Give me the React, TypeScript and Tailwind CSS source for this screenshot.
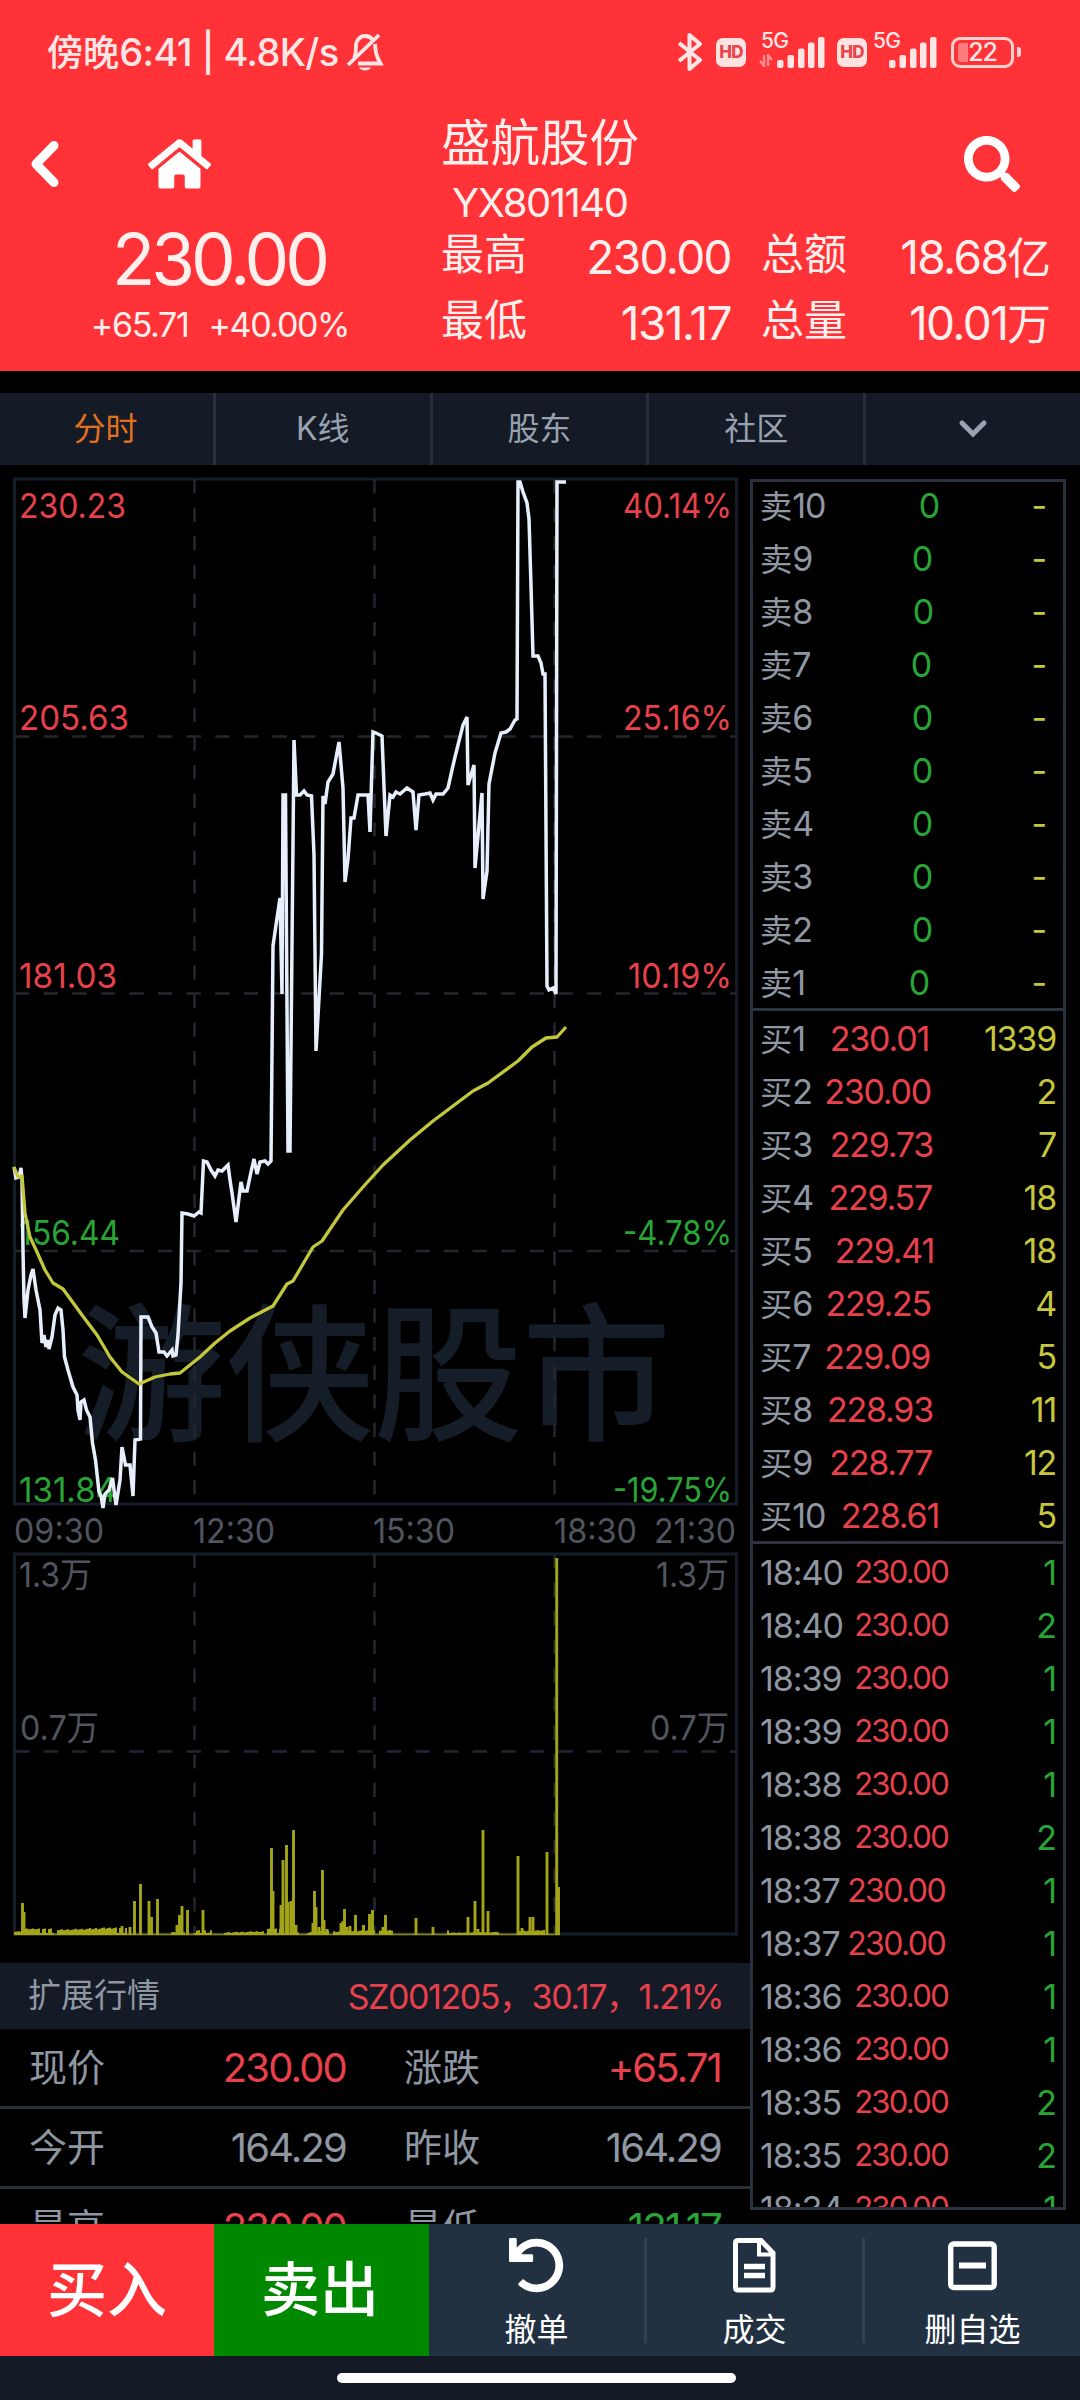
import { FaHome, FaSearch, FaUndo } from "react-icons/fa";

const RED = "#e8414b";
const GREEN = "#28a535";

/* Latin runs keep the surrounding size, Chinese runs are set slightly smaller. */
function Mix({ text }: { text: string }) {
  const parts = text.split(/([\u4e00-\u9fff]+)/).filter(Boolean);
  return (
    <>
      {parts.map((p, i) =>
        /[\u4e00-\u9fff]/.test(p) ? (
          <span key={i} className="text-[0.95em] tracking-normal">
            {p}
          </span>
        ) : (
          <span key={i}>{p}</span>
        )
      )}
    </>
  );
}

/* ---------- status bar ---------- */

function Signal() {
  return (
    <svg width="48" height="32" viewBox="0 0 48 32" fill="#ffe6e6">
      <rect x="0" y="23" width="6.5" height="8" rx="2" />
      <rect x="10.5" y="18" width="6.5" height="13" rx="2" />
      <rect x="21" y="11.5" width="6.5" height="19.5" rx="2" />
      <rect x="31" y="5.5" width="6.5" height="25.5" rx="2" />
      <rect x="41" y="0" width="6.5" height="31" rx="2" />
    </svg>
  );
}

function HD() {
  return (
    <div className="flex h-[29px] w-[30px] items-center justify-center rounded-[7px] bg-[#ffe3e3] text-[17px] leading-none font-extrabold tracking-[-0.05em] text-[#e8464b]">
      HD
    </div>
  );
}

function StatusBar() {
  return (
    <div className="flex h-[104px] items-center pl-[47px] text-[#ffe6e6]">
      <div className="flex w-[631px] items-center text-[38px] leading-[40px] font-medium tracking-[-0.016em] whitespace-pre">
        <span className="w-[294px]">
          <Mix text="傍晚6:41 | 4.8K/s" />
        </span>
        <svg width="40" height="40" viewBox="0 0 40 40" fill="none" stroke="#ffe6e6" strokeWidth="3.8" className="ml-[4px]">
          <path d="M9 26 C11 23 11 20 11 14 C11 8 15 4 20 4 C23 4 26 5.500 27.500 7.500" />
          <path d="M30 12 C30.500 19 31 24 35.500 31.500 L13 31.500" />
          <path d="M34 3 L3 33" />
          <path d="M14 35.500 H26 C24 39.500 16 39.500 14 35.500Z" fill="#ffe6e6" stroke="none" />
        </svg>
      </div>
      <svg width="25" height="40" viewBox="0 0 25 40" fill="none" stroke="#ffe6e6" strokeWidth="4" strokeLinejoin="round">
        <path d="M1 11 L22 28 L11.500 37 V3 L22 12 L1 29" />
      </svg>
      <div className="ml-[13px]">
        <HD />
      </div>
      <div className="relative ml-[31px] mt-[2px]">
        <Signal />
        <span className="absolute top-[-6px] left-[-16px] text-[21px] leading-[20px] font-medium tracking-[-0.04em]">5G</span>
        <svg className="absolute top-[17px] left-[-18px] opacity-50" width="14" height="13" viewBox="0 0 14 13" fill="none" stroke="#ffe6e6" strokeWidth="2.400">
          <path d="M5 1 V12 L1 7 M9 12 V1 L13 6" />
        </svg>
      </div>
      <div className="ml-[12px]">
        <HD />
      </div>
      <div className="relative ml-[22px] mt-[2px]">
        <Signal />
        <span className="absolute top-[-6px] left-[-16px] text-[21px] leading-[20px] font-medium tracking-[-0.04em]">5G</span>
      </div>
      <div className="relative ml-[14px] flex h-[31px] w-[63px] items-center justify-center rounded-[9px] border-[3px] border-[#ffd0d0] text-[25px] leading-none font-medium tracking-[-0.05em]">
        <span className="absolute top-[3px] left-[4px] h-[19px] w-[10px] rounded-l-[3px] bg-[#ff7c7e]" />
        <span className="relative">22</span>
      </div>
      <div className="ml-[3px] h-[10px] w-[4px] rounded-r-[3px] bg-[#ffd0d0]" />
    </div>
  );
}

/* ---------- header ---------- */

function Stat({ label, value }: { label: string; value: string }) {
  return (
    <div className="flex h-[66px] items-center justify-between">
      <span className="text-[43px] tracking-normal">{label}</span>
      <span className="mt-[6px] text-[46px] tracking-[-0.035em]">
        <Mix text={value} />
      </span>
    </div>
  );
}

function Header() {
  return (
    <header className="h-[371px] bg-[#ff3337] text-[#fff0ee]">
      <StatusBar />
      <div className="flex h-[128px]">
        <div className="flex h-[120px] w-[441px] items-center pl-[29px]">
          <svg width="32" height="50" viewBox="0 0 32 50" fill="none" stroke="#fff" strokeWidth="9" strokeLinejoin="round" strokeLinecap="round">
            <path d="M25 6.500 L7 25 L25 43.500" />
          </svg>
          <FaHome className="ml-[87px] h-[56px] w-[63px] text-white" />
        </div>
        <div className="flex-1 pt-[11px]">
          <h1 className="text-[49.5px] leading-[56px]">盛航股份</h1>
          <p className="pl-[11px] pt-[4px] text-[40px] leading-[56px] tracking-[-0.037em]">YX801140</p>
        </div>
        <div className="flex h-[120px] w-[116px] items-center">
          <FaSearch className="h-[56px] w-[56px] text-white" />
        </div>
      </div>
      <div className="flex">
        <div className="flex w-[438px] flex-col items-center">
          <div className="text-[71px] leading-[54px] tracking-[-0.057em]">230.00</div>
          <div className="flex gap-[20px] pt-[18px] pl-[2px] text-[34px] leading-[42px] tracking-[-0.04em] whitespace-nowrap">
            <span>+65.71</span>
            <span>+40.00%</span>
          </div>
        </div>
        <div className="ml-[3px] w-[290px] -mt-[11px]">
          <Stat label="最高" value="230.00" />
          <Stat label="最低" value="131.17" />
        </div>
        <div className="ml-[30px] w-[290px] -mt-[11px]">
          <Stat label="总额" value="18.68亿" />
          <Stat label="总量" value="10.01万" />
        </div>
      </div>
    </header>
  );
}

function Tabs() {
  return (
    <nav className="mt-[22px] flex h-[72px] bg-[#141b26] text-[32px] text-[#98a2b0]">
      {["分时", "K线", "股东", "社区"].map((t, i) => (
        <div
          key={t}
          className={
            "flex items-center justify-center border-r-[3px] border-[#25303c] pb-[1px] " +
            (i === 0 ? "w-[216px] pr-[2px] text-[#e2711f]" : "w-[216.7px]")
          }
        >
          {t}
        </div>
      ))}
      <div className="flex flex-1 items-center justify-center">
        <svg width="30" height="20" viewBox="0 0 30 20" fill="none" stroke="#98a2b0" strokeWidth="5" strokeLinecap="round">
          <path d="M4 4 L15 15 L26 4" />
        </svg>
      </div>
    </nav>
  );
}

/* ---------- charts ---------- */

const PRICE_LINE =
  "14,1167 16,1178 19,1177 21,1168 22,1180 23,1250 24,1300 25,1318 28,1290 31,1275 33,1269 36,1290 40,1310 42,1343 44,1335 46,1347 48,1340 49,1349 52,1337 55,1315 58,1308 61,1310 63,1330 64.5,1357 68,1370 73,1387 77,1395 78,1410 80,1420 81,1402 84,1400 86.5,1410 90,1417 92.5,1443 95.5,1460 99,1492 101,1496 103,1508 105,1494 109,1490 112.5,1478 114,1490 116,1505 120,1480 122,1447 125.5,1465 130,1465 133,1496 135,1440 140.5,1439 141,1317 148,1317 152,1327 156,1333 159,1352 164,1352 167,1356 172,1350 173,1356 176,1355 178,1335 181,1283 182,1213 188,1214 194,1216 199,1212 201,1213 203.5,1161 207,1162 211,1170 215,1176 218,1170 222,1171 228,1165 230,1180 232,1193 236,1222 241,1182 243,1191 247,1191 251,1172 254,1159 257,1174 260,1162 265,1161 268,1164 271,1161 273,946 276,925 280,898 282,994 283,795 285.5,795 288,1151 290,1151 294,740 296.5,795 300,795 304,791 307,795 311.5,796 314,855 316,1051 321.5,954 323,796 325,804 328,782 333,774 339,742 343,788 345,882 348,859 351,818 354,818 358,795 368,795 370,832 373,732 376,733 382,736 386,836 390,795 393,797 396,792 400,794 407,788 413,792 416,830 419,795 425,794 430,793 433,800 436,794 443,794 448,788 452,770 455,757 460,737 463,725 467,717 468,785 474,765 475,868 482,793 483,899 487,871 489,784 495,753 501,733 506,732 510,729 515,720 517,719 518,482 520,482 523,492 527,503 529,519 531,586 533,656 538,656 541,663 543,674 545,674 547,986 549,990 553,988 556,994 557,482 566,482";

const AVERAGE_LINE =
  "14,1167 18,1177 22,1176 25,1213 30,1237 37,1252 45,1270 53,1283 63,1289 82,1315 97,1335 110,1357 122,1372 139,1384 155,1377 170,1374 180,1373 200,1357 215,1343 230,1331 250,1318 273,1306 287,1284 293,1281 313,1247 322,1241 343,1210 363,1187 383,1165 410,1140 433,1121 473,1091 488,1083 518,1061 532,1047 546,1038 557,1037 566,1027";

const VOLUME: [number, number][] = [
  [22.5, 32], [24, 23], [122, 9], [130, 8], [134.500, 34], [140.500, 51], [149, 34], [151.500, 18], [157.500, 36],
  [177, 10], [179.500, 20], [182, 29], [187.500, 25], [203, 25], [271.500, 87], [273, 44], [281, 30], [283, 75],
  [286.500, 90], [288, 33], [291, 34], [293.500, 105], [296, 10], [313, 12], [314.500, 44], [316, 28], [319, 8],
  [322.500, 65], [324, 15], [327, 6], [341, 12], [343, 14], [344.500, 26], [347, 8], [350, 9], [355.500, 20],
  [363.500, 10], [369.500, 21], [372.500, 25], [383, 8], [385.500, 20], [416, 17], [433, 8], [468, 18],
  [475, 34], [478, 6], [483, 105], [488, 24], [518, 79], [522, 7], [530, 18], [533, 18], [547, 83],
  [556.700, 377], [558.500, 48],
];

/* Small trades along the base line, with the quiet stretches left out. */
const ACTIVE: [number, number, number][] = [
  [15, 24, 2], [25, 54, 5], [58, 128, 6], [172, 186, 3], [195, 213, 3], [225, 264, 5], [268, 300, 5],
  [308, 330, 7], [334, 376, 5], [380, 394, 4], [448, 470, 3], [470, 500, 3], [520, 545, 4],
];
const MINOR: [number, number][] = ACTIVE.flatMap(([from, to, max]) => {
  const out: [number, number][] = [];
  for (let x = from; x < to; x += 2) out.push([x, 2 + ((x * 37 + (x % 7) * 13) % 11) * (max / 11)]);
  return out;
});

const V_LINES = [194.5, 374.5, 554.5];

function Label({ x, y, w, text, fill, end }: { x: number; y: number; w: number; text: string; fill: string; end?: boolean }) {
  return (
    <text x={end ? x - w : x} y={y} textLength={w} lengthAdjust="spacingAndGlyphs" fill={fill} fontSize="34">
      {text}
    </text>
  );
}

function PriceChart() {
  return (
    <svg width="750" height="1045" viewBox="0 465 750 1045" className="block overflow-visible">
      <text x="77" y="1429" fontSize="149" textLength="594" fontWeight="500" fill="#151d28">
        游侠股市
      </text>
      <rect x="14.500" y="479" width="722" height="1025" fill="none" stroke="#161c26" strokeWidth="3" />
      <g stroke="#24272e" strokeWidth="2.500" strokeDasharray="14.300 14.300">
        {V_LINES.map((x) => (
          <line key={x} x1={x} x2={x} y1="479" y2="1504" />
        ))}
        {[736.500, 993.500, 1251].map((y) => (
          <line key={y} x1="15" x2="736" y1={y} y2={y} />
        ))}
      </g>
      <Label x={19} y={518} w={107} text="230.23" fill={RED} />
      <Label x={19} y={730} w={110} text="205.63" fill={RED} />
      <Label x={19} y={988} w={98} text="181.03" fill={RED} />
      <Label x={19} y={1245} w={101} text="156.44" fill={GREEN} />
      <Label x={19} y={1502} w={98} text="131.84" fill={GREEN} />
      <Label end x={732} y={518} w={109} text="40.14%" fill={RED} />
      <Label end x={732} y={730} w={109} text="25.16%" fill={RED} />
      <Label end x={732} y={988} w={104} text="10.19%" fill={RED} />
      <Label end x={732} y={1245} w={109} text="-4.78%" fill={GREEN} />
      <Label end x={732} y={1502} w={119} text="-19.75%" fill={GREEN} />
      <polyline points={PRICE_LINE} fill="none" stroke="#e6effb" strokeWidth="3.500" />
      <polyline points={AVERAGE_LINE} fill="none" stroke="#c3c73c" strokeWidth="3.300" strokeLinejoin="round" />
    </svg>
  );
}

function TimeAxis() {
  const c = "#50555f";
  return (
    <svg width="750" height="42" viewBox="0 1510 750 42" className="block">
      <Label x={14} y={1543} w={90} text="09:30" fill={c} />
      <Label x={193} y={1543} w={82} text="12:30" fill={c} />
      <Label x={373} y={1543} w={82} text="15:30" fill={c} />
      <Label x={554} y={1543} w={83} text="18:30" fill={c} />
      <Label x={654} y={1543} w={82} text="21:30" fill={c} />
    </svg>
  );
}

function VolumeChart() {
  const c = "#50555f";
  return (
    <svg width="750" height="386" viewBox="0 1552 750 386" className="block">
      <rect x="14.500" y="1554" width="722" height="380" fill="none" stroke="#161c26" strokeWidth="3" />
      <g stroke="#24272e" strokeWidth="2.500" strokeDasharray="14.300 14.300">
        {V_LINES.map((x) => (
          <line key={x} x1={x} x2={x} y1="1554" y2="1934" />
        ))}
        <line x1="15" x2="736" y1="1751.500" y2="1751.500" />
      </g>
      <Label x={19} y={1587} w={73} text="1.3万" fill={c} />
      <Label x={20} y={1740} w={79} text="0.7万" fill={c} />
      <Label end x={729} y={1587} w={73} text="1.3万" fill={c} />
      <Label end x={729} y={1740} w={79} text="0.7万" fill={c} />
      <line x1="14" x2="560" y1="1934.300" y2="1934.300" stroke="#7f811a" strokeWidth="1.800" />
      <g stroke="#a3a517" strokeWidth="2">
        {MINOR.map(([x, h], i) => (
          <line key={i} x1={x} x2={x} y1="1935" y2={1935 - h} />
        ))}
        {VOLUME.map(([x, h], i) => (
          <line key={i} x1={x} x2={x} y1="1935" y2={1935 - h} strokeWidth="2.900" />
        ))}
      </g>
    </svg>
  );
}

/* ---------- quote table ---------- */

type Cell = { label: string; value: string; tone: string };

function QuoteRow({ cells }: { cells: Cell[] }) {
  return (
    <div className="flex h-[80px] shrink-0 border-b-[3px] border-[#2b3038] pb-[1px]">
      {cells.map((c) => (
        <div key={c.label} className="flex w-[375px] items-center justify-between pr-[29px] pl-[29px]">
          <span className="text-[38px] text-[#8f97a3]">{c.label}</span>
          <span className={"mt-[2px] text-[40px] tracking-[-0.046em] " + c.tone}>{c.value}</span>
        </div>
      ))}
    </div>
  );
}

function Quotes() {
  return (
    <section className="mt-[25px] flex h-[261px] flex-col overflow-hidden">
      <div className="flex h-[66px] shrink-0 items-center justify-between bg-[#141b26] pr-[27px] pl-[28px]">
        <span className="text-[33px] text-[#8f97a3]">扩展行情</span>
        <span className="text-[34px] tracking-[-0.042em] text-[#e8414b]">SZ001205，30.17，1.21%</span>
      </div>
      <QuoteRow
        cells={[
          { label: "现价", value: "230.00", tone: "text-[#e8414b]" },
          { label: "涨跌", value: "+65.71", tone: "text-[#e8414b]" },
        ]}
      />
      <QuoteRow
        cells={[
          { label: "今开", value: "164.29", tone: "text-[#8f97a3]" },
          { label: "昨收", value: "164.29", tone: "text-[#8f97a3]" },
        ]}
      />
      <QuoteRow
        cells={[
          { label: "最高", value: "230.00", tone: "text-[#e8414b]" },
          { label: "最低", value: "131.17", tone: "text-[#28a535]" },
        ]}
      />
    </section>
  );
}

/* ---------- order book ---------- */

type Order = [label: string, price: string, volume: string, priceEnd: number];

const SELL: Order[] = [
  ["卖10", "0", "-", 179], ["卖9", "0", "-", 172], ["卖8", "0", "-", 173], ["卖7", "0", "-", 171], ["卖6", "0", "-", 172],
  ["卖5", "0", "-", 172], ["卖4", "0", "-", 172], ["卖3", "0", "-", 172], ["卖2", "0", "-", 172], ["卖1", "0", "-", 169],
];
const BUY: Order[] = [
  ["买1", "230.01", "1339", 169], ["买2", "230.00", "2", 171], ["买3", "229.73", "7", 173], ["买4", "229.57", "18", 172],
  ["买5", "229.41", "18", 174], ["买6", "229.25", "4", 171], ["买7", "229.09", "5", 170], ["买8", "228.93", "11", 173],
  ["买9", "228.77", "12", 172], ["买10", "228.61", "5", 179],
];
const TRADES: [string, string][] = [
  ["18:40", "1"], ["18:40", "2"], ["18:39", "1"], ["18:39", "1"], ["18:38", "1"], ["18:38", "2"], ["18:37", "1"],
  ["18:37", "1"], ["18:36", "1"], ["18:36", "1"], ["18:35", "2"], ["18:35", "2"], ["18:34", "1"],
];

function OrderRow({ order, tone }: { order: Order; tone: string }) {
  const [label, price, volume, end] = order;
  const dash = volume === "-";
  return (
    <div className="flex h-[53px] items-center justify-between pr-[7px] pl-[7px] text-[34px] tracking-[-0.036em]">
      <div className="flex items-center justify-between" style={{ width: end }}>
        <span className="text-[#8f97a3]">
          <Mix text={label} />
        </span>
        <span className={tone}>{price}</span>
      </div>
      <span className={"text-[#c6c73b] " + (dash ? "pr-[10px]" : "")}>{volume}</span>
    </div>
  );
}

function OrderBook() {
  return (
    <aside className="mt-[14px] h-[1731px] w-[316px] overflow-hidden border-[3px] border-[#2a323d]">
      <div className="flow-root h-[529px] border-b-[3px] border-[#2a323d]">
        <div className="-mt-[3px]">
          {SELL.map((o) => (
            <OrderRow key={o[0]} order={o} tone="text-[#28a535]" />
          ))}
        </div>
      </div>
      <div className="h-[533px] border-b-[3px] border-[#2a323d] pt-px">
        {BUY.map((o) => (
          <OrderRow key={o[0]} order={o} tone="text-[#e8414b]" />
        ))}
      </div>
      <div className="pt-[2px]">
        {TRADES.map(([time, volume], i) => {
          const wide = time === "18:37";
          return (
            <div key={i} className="flex h-[53px] items-center justify-between pr-[7px] pl-[7px] text-[34px] tracking-[-0.03em]">
              <div className={"flex items-center justify-between " + (wide ? "w-[185px]" : "w-[188px]")}>
                <span className="text-[#8f97a3]">{time}</span>
                <span className={"text-[#e8414b] " + (wide ? "text-[32px] tracking-[-0.05em]" : "text-[31px] tracking-[-0.055em]")}>230.00</span>
              </div>
              <span className="text-[#28a535]">{volume}</span>
            </div>
          );
        })}
      </div>
    </aside>
  );
}

/* ---------- bottom bar ---------- */

function BottomBar() {
  return (
    <footer>
      <div className="flex h-[132px] bg-[#223142] text-white">
        <button className="w-[214px] bg-[#ff3337] text-[60px] font-medium">买入</button>
        <button className="w-[215px] bg-[#008800] pr-[3px] text-[59px] font-medium">卖出</button>
        <div className="flex flex-1 items-center">
          <div className="flex h-[105px] w-[218px] flex-col items-center border-r-[3px] border-[#34414f]">
            <FaUndo className="h-[55px] w-[55px] shrink-0" />
            <span className="pt-[18px] text-[32px] leading-[38px]">撤单</span>
          </div>
          <div className="flex h-[105px] w-[218px] flex-col items-center border-r-[3px] border-[#34414f]">
            <svg width="43" height="55" viewBox="0 0 43 55" fill="none" stroke="#fff" className="shrink-0">
              <path d="M4.500 2.500 H28 L40 15 V49 Q40 52 37.500 52 H5 Q2.500 52 2.500 49.500 V5 Q2.500 2.500 5 2.500Z" strokeWidth="5" />
              <path d="M26 3 V16.500 H40" strokeWidth="4" />
              <path d="M11 28.500 H32 M11 37.500 H32" strokeWidth="5.500" />
            </svg>
            <span className="pt-[18px] text-[32px] leading-[38px]">成交</span>
          </div>
          <div className="flex h-[105px] flex-1 flex-col items-center">
            <svg width="49" height="55" viewBox="0 0 49 55" fill="none" stroke="#fff" className="shrink-0">
              <rect x="2.700" y="6" width="43.500" height="43.500" rx="3" strokeWidth="5.400" />
              <path d="M11 27.500 H38" strokeWidth="6" />
            </svg>
            <span className="pt-[18px] text-[32px] leading-[38px]">删自选</span>
          </div>
        </div>
      </div>
      <div className="flex h-[44px] bg-[#141a25] pt-[17px] pl-[337px]">
        <div className="h-[10px] w-[399px] rounded-full bg-white" />
      </div>
    </footer>
  );
}

export default function App() {
  return (
    <div className="h-[2400px] w-[1080px] overflow-hidden bg-black font-['Inter','Noto_Sans_CJK_SC',sans-serif] font-normal">
      <Header />
      <Tabs />
      <main className="flex h-[1759px]">
        <div className="w-[750px]">
          <PriceChart />
          <TimeAxis />
          <VolumeChart />
          <Quotes />
        </div>
        <OrderBook />
      </main>
      <BottomBar />
    </div>
  );
}
